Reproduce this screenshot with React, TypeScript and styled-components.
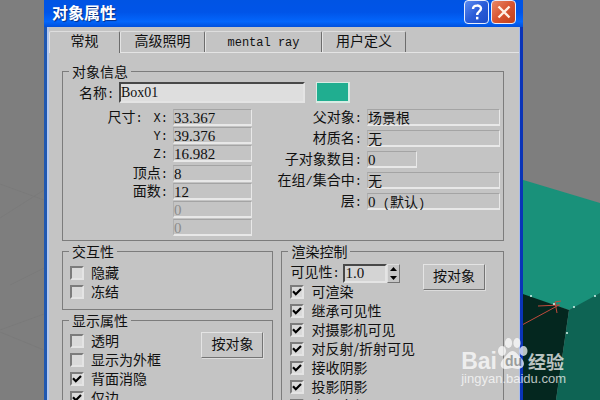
import React, { useState } from "react";
import styled, { createGlobalStyle } from "styled-components";

const GlobalStyle = createGlobalStyle`
  * { box-sizing: border-box; }
  body { margin: 0; background: #7e7e7e; }
`;

const Stage = styled.main`
  position: relative;
  height: 100vh;
  overflow: hidden;
  background: #7e7e7e;
  color: #101010;
  font: 14px/16px "Noto Sans CJK SC", sans-serif;
`;

const Viewport = styled.svg`
  position: absolute;
  top: 0;
  right: 0;
  width: 600px;
  height: 400px;
`;

const Dialog = styled.section`
  position: relative;
  margin: 0 77px 0 44px;
  min-height: 100%;
  background: #c4c4c4;
  border-left: 3px solid #1f57b0;
  border-right: 3px solid #0a34b8;
`;

const TitleBar = styled.header`
  display: flex;
  align-items: center;
  gap: 2px;
  height: 27px;
  margin: 0 -3px;
  padding: 0 7px 3px 8px;
  background: linear-gradient(#0054e4 0, #0054e8 45%, #0366fc 80%, #0050dc 100%);
`;

const Title = styled.h1`
  flex: 1;
  margin: 0;
  color: #fff;
  font-size: 16px;
  line-height: 24px;
  font-weight: 700;
  text-shadow: 1px 1px 1px #0a2f80;
`;

const CaptionButton = styled.button<{ $tone: "help" | "close" }>`
  width: 25px;
  height: 24px;
  padding: 0;
  border: 1px solid #e8eefc;
  border-radius: 4px;
  background: ${(p) =>
    p.$tone === "help"
      ? "linear-gradient(135deg, #5c8cf0, #2a5cd8 50%, #1c4cc8)"
      : "linear-gradient(135deg, #e88868, #d85430 50%, #c04018)"};
  svg { display: block; margin: auto; }
`;

const Client = styled.div`
  border-left: 2px solid #b4c8ee;
  border-right: 1px solid #a8bcec;
  padding-top: 4px;
`;

const TabBar = styled.nav`
  display: flex;
  border-bottom: 1px solid #e4e4e4;
`;

const Tab = styled.button<{ $width: number; $active?: boolean }>`
  width: ${(p) => p.$width}px;
  height: ${(p) => (p.$active ? 22 : 21)}px;
  margin-bottom: ${(p) => (p.$active ? "-1px" : "0")};
  padding: 0 0 ${(p) => (p.$active ? 5 : 4)}px;
  border: 0;
  border-top: 1px solid #dedede;
  border-left: 1px solid #e4e4e4;
  border-right: 1px solid #6c6c6c;
  border-radius: 2px 2px 0 0;
  background: #c4c4c4;
  color: inherit;
  font: inherit;
`;

const Half = styled.span`
  font: 12px/0 "Liberation Mono", monospace;
`;

const Digits = styled.span`
  font: 15px/0 "Liberation Serif", serif;
`;

const Panel = styled.div`
  display: flex;
  flex-direction: column;
  gap: 2px;
  padding: 10px 15px 0 13px;
`;

const Group = styled.fieldset<{ $grow?: boolean }>`
  min-width: 0;
  margin: 0;
  padding: 0;
  border: 1px solid #7c7c7c;
  flex: ${(p) => (p.$grow ? "1" : "none")};
`;

const Legend = styled.legend`
  margin-left: 6px;
  padding: 0 3px;
  line-height: 16px;
`;

const NameRow = styled.div`
  display: flex;
  align-items: center;
  gap: 11px;
  padding: 3px 0 0 16px;
`;

const NameLabel = styled.label`
  width: 29px;
  padding-bottom: 2px;
  white-space: nowrap;
`;

const NameInput = styled.input`
  flex: 1;
  min-width: 0;
  max-width: 186px;
  height: 21px;
  padding: 0;
  border: 2px solid;
  border-color: #484848 #e4e4e4 #e4e4e4 #484848;
  background: #dedede;
  color: #101010;
  font: 14px/16px "Liberation Serif", serif;
`;

const Swatch = styled.button`
  width: 34px;
  height: 21px;
  padding: 0;
  border: 1px solid #d8ece4;
  border-right-width: 2px;
  border-bottom-width: 2px;
  background: #20ae90;
`;

const InfoColumns = styled.div`
  display: flex;
  padding: 6px 3px 4px 0;
`;

const SizeList = styled.dl`
  display: grid;
  grid-template-columns: 105px 79px;
  column-gap: 5px;
  row-gap: 1px;
  margin: 0;
`;

const ParentList = styled.dl`
  flex: 1;
  display: grid;
  grid-template-columns: 110px 1fr;
  column-gap: 5px;
  row-gap: 4px;
  align-content: start;
  margin: 0;
`;

const Term = styled.dt<{ $gapAbove?: boolean }>`
  height: 17px;
  margin-top: ${(p) => (p.$gapAbove ? 2 : 0)}px;
  text-align: right;
  line-height: 14px;
  white-space: nowrap;
`;

const Axis = styled(Half)`
  margin-left: 11px;
`;

const Value = styled.dd<{ $gapAbove?: boolean; $dim?: boolean; $short?: boolean }>`
  height: 17px;
  margin: ${(p) => (p.$gapAbove ? 2 : 0)}px 0 0;
  width: ${(p) => (p.$short ? "50px" : "auto")};
  border: 1px solid;
  border-color: #a4a4a4 #e8e8e8 #e8e8e8 #b0b0b0;
  border-bottom-width: 2px;
  color: ${(p) => (p.$dim ? "#8c8c8c" : "inherit")};
  white-space: nowrap;
  line-height: 15px;
`;

const LowerColumns = styled.div`
  display: grid;
  grid-template-columns: 211fr 222fr;
  gap: 8px;
`;

const Stack = styled.div`
  display: flex;
  flex-direction: column;
  gap: 2px;
`;

const GroupBody = styled.div<{ $top: number; $bottom: number }>`
  display: flex;
  justify-content: space-between;
  align-items: flex-start;
  padding: ${(p) => p.$top}px 9px ${(p) => p.$bottom}px 7px;
`;

const CheckLabel = styled.label`
  display: flex;
  align-items: center;
  gap: 7px;
  height: 19px;
  white-space: nowrap;
`;

const CheckText = styled.span`
  padding-bottom: 2px;
`;

const CheckBox = styled.input`
  appearance: none;
  width: 14px;
  height: 14px;
  margin: 0;
  border: 2px solid;
  border-color: #7c7c7c #e4e4e4 #e4e4e4 #7c7c7c;
  background: #dadada;
  &:checked {
    background: #dadada
      url("data:image/svg+xml,%3Csvg xmlns='http://www.w3.org/2000/svg' viewBox='0 0 10 10'%3E%3Cpath d='M1 4.2L3.8 7.2L9 2' fill='none' stroke='%23000' stroke-width='2.2'/%3E%3C/svg%3E")
      center / 10px 10px no-repeat;
  }
`;

const PushButton = styled.button`
  width: 62px;
  height: 26px;
  margin-top: 1px;
  padding: 0 0 4px;
  border: 1px solid;
  border-color: #e4e4e4 #747474 #747474 #e4e4e4;
  box-shadow: 1px 1px 0 #dcdcdc;
  background: #c6c6c6;
  color: inherit;
  font: inherit;
`;

const RenderHead = styled.div`
  display: flex;
  align-items: flex-start;
  height: 23px;
  padding: 5px 18px 0 8px;
`;

const VisibilityLabel = styled.label`
  width: 53px;
  line-height: 14px;
  white-space: nowrap;
`;

const VisibilityInput = styled(NameInput)`
  flex: none;
  width: 44px;
  height: 19px;
  background: #d4d4d4;
  font-size: 15px;
`;

const Spinner = styled.div`
  display: grid;
  grid-template-rows: 1fr 1fr;
  width: 13px;
  height: 19px;
  margin-right: auto;
  border: 1px solid;
  border-color: #dedede #747474 #747474 #dedede;
`;

const SpinButton = styled.button`
  display: grid;
  place-items: center;
  padding: 0;
  border: 0;
  background: #c6c6c6;
`;

const RenderButton = styled(PushButton)`
  margin-top: 0;
`;

const RenderChecks = styled.div`
  padding: 0 8px 8px 8px;
`;

const Watermark = styled.aside`
  position: absolute;
  right: 34px;
  bottom: 13px;
  color: #fff;
  opacity: 0.72;
`;

const Brand = styled.div`
  display: flex;
  align-items: flex-end;
  height: 38px;
  font: 700 23px/20px "Liberation Sans", sans-serif;
`;

const BrandSuffix = styled.span`
  font: 700 18px/20px "Noto Sans CJK SC", sans-serif;
`;

const Address = styled.div`
  font: 13px/16px "Liberation Sans", sans-serif;
`;

function Checks({ items }: { items: [string, boolean][] }) {
  const [state, setState] = useState(items.map(([, on]) => on));
  return (
    <div>
      {items.map(([label], i) => (
        <CheckLabel key={label}>
          <CheckBox
            type="checkbox"
            checked={state[i]}
            onChange={() => setState(state.map((on, j) => (j === i ? !on : on)))}
          />
          <CheckText>{label}</CheckText>
        </CheckLabel>
      ))}
    </div>
  );
}

function Scene() {
  return (
    <Viewport viewBox="0 0 600 400" aria-hidden="true">
      <g stroke="#7a7a7a" fill="none">
        <path d="M0 184L44 200M0 218L44 190M10 285L44 268M0 330L44 314M0 332L44 350" />
      </g>
      <path d="M520 179L600 203V296L569 310L520 294Z" fill="#19917a" />
      <path d="M520 293L569 310L556 400H520Z" fill="#04271f" />
      <path d="M569 310L600 293V400H556Z" fill="#0e6454" />
      <path d="M522 325L559 305M538 306L560 305M557 313L555 302L561 301" stroke="#c04a3c" fill="none" />
      <g fill="#d8f4ec">
        <circle cx="531" cy="296" r="1" />
        <circle cx="554" cy="304" r="1" />
        <circle cx="574" cy="307" r="1" />
        <circle cx="595" cy="296" r="1" />
        <circle cx="567" cy="333" r="1" />
      </g>
    </Viewport>
  );
}

export default function App() {
  const [name, setName] = useState("Box01");
  const [visibility, setVisibility] = useState("1.0");
  const step = (d: number) => setVisibility((parseFloat(visibility) + d).toFixed(1));

  return (
    <Stage>
      <GlobalStyle />
      <Scene />
      <Dialog aria-label="对象属性">
        <TitleBar>
          <Title>对象属性</Title>
          <CaptionButton $tone="help" aria-label="帮助">
            <svg width="16" height="18" viewBox="0 0 16 18" fill="none" stroke="#fff" strokeWidth="2.4">
              <path d="M4 6C4 1.5 12 1.5 12 5.6C12 8.5 8.2 8.4 8.2 12" />
              <path d="M8.2 13.8V16.4" />
            </svg>
          </CaptionButton>
          <CaptionButton $tone="close" aria-label="关闭">
            <svg width="16" height="16" viewBox="0 0 16 16" stroke="#fff0e4" strokeWidth="2.4">
              <path d="M2.5 2.5L13.5 13.5M13.5 2.5L2.5 13.5" />
            </svg>
          </CaptionButton>
        </TitleBar>
        <Client>
          <TabBar>
            <Tab $width={71} $active>常规</Tab>
            <Tab $width={85}>高级照明</Tab>
            <Tab $width={117}><Half>mental ray</Half></Tab>
            <Tab $width={84}>用户定义</Tab>
          </TabBar>
          <Panel>
            <Group>
              <Legend>对象信息</Legend>
              <NameRow>
                <NameLabel htmlFor="name">名称<Half>:</Half></NameLabel>
                <NameInput id="name" value={name} onChange={(e) => setName(e.target.value)} />
                <Swatch aria-label="颜色" />
              </NameRow>
              <InfoColumns>
                <SizeList>
                  <Term>尺寸<Half>:</Half><Axis>X:</Axis></Term>
                  <Value><Digits>33.367</Digits></Value>
                  <Term><Half>Y:</Half></Term>
                  <Value><Digits>39.376</Digits></Value>
                  <Term><Half>Z:</Half></Term>
                  <Value><Digits>16.982</Digits></Value>
                  <Term $gapAbove>顶点<Half>:</Half></Term>
                  <Value $gapAbove><Digits>8</Digits></Value>
                  <Term>面数<Half>:</Half></Term>
                  <Value><Digits>12</Digits></Value>
                  <Term />
                  <Value $dim><Digits>0</Digits></Value>
                  <Term />
                  <Value $dim><Digits>0</Digits></Value>
                </SizeList>
                <ParentList>
                  <Term>父对象<Half>:</Half></Term>
                  <Value>场景根</Value>
                  <Term>材质名<Half>:</Half></Term>
                  <Value>无</Value>
                  <Term>子对象数目<Half>:</Half></Term>
                  <Value $short><Digits>0</Digits></Value>
                  <Term>在组<Half>/</Half>集合中<Half>:</Half></Term>
                  <Value>无</Value>
                  <Term>层<Half>:</Half></Term>
                  <Value><Digits>0</Digits><Half> (</Half>默认<Half>)</Half></Value>
                </ParentList>
              </InfoColumns>
            </Group>
            <LowerColumns>
              <Stack>
                <Group>
                  <Legend>交互性</Legend>
                  <GroupBody $top={4} $bottom={8}>
                    <Checks items={[["隐藏", false], ["冻结", false]]} />
                  </GroupBody>
                </Group>
                <Group $grow>
                  <Legend>显示属性</Legend>
                  <GroupBody $top={3} $bottom={8}>
                    <Checks
                      items={[["透明", false], ["显示为外框", false], ["背面消隐", true], ["仅边", true]]}
                    />
                    <PushButton>按对象</PushButton>
                  </GroupBody>
                </Group>
              </Stack>
              <Group>
                <Legend>渲染控制</Legend>
                <RenderHead>
                  <VisibilityLabel htmlFor="visibility">可见性<Half>:</Half></VisibilityLabel>
                  <VisibilityInput
                    id="visibility"
                    value={visibility}
                    onChange={(e) => setVisibility(e.target.value)}
                  />
                  <Spinner>
                    <SpinButton aria-label="增加" onClick={() => step(0.1)}>
                      <svg width="7" height="4" viewBox="0 0 7 4"><path d="M0 4L3.5 0L7 4Z" /></svg>
                    </SpinButton>
                    <SpinButton aria-label="减少" onClick={() => step(-0.1)}>
                      <svg width="7" height="4" viewBox="0 0 7 4"><path d="M0 0L3.5 4L7 0Z" /></svg>
                    </SpinButton>
                  </Spinner>
                  <RenderButton>按对象</RenderButton>
                </RenderHead>
                <RenderChecks>
                  <Checks
                    items={[
                      ["可渲染", true],
                      ["继承可见性", true],
                      ["对摄影机可见", true],
                      ["对反射/折射可见", true],
                      ["接收阴影", true],
                      ["投影阴影", true],
                      ["应用大气", true],
                    ]}
                  />
                </RenderChecks>
              </Group>
            </LowerColumns>
          </Panel>
        </Client>
      </Dialog>
      <Watermark>
        <Brand>
          Bai
          <svg width="31" height="36" viewBox="0 0 31 36" fill="#fff">
            <ellipse cx="5" cy="16" rx="4" ry="5" />
            <ellipse cx="11.5" cy="8" rx="3.6" ry="5" />
            <ellipse cx="20" cy="8" rx="3.6" ry="5" />
            <ellipse cx="26.5" cy="16" rx="4" ry="5" />
            <path d="M15.5 16C19 16 21 20 24 23C30 29 26 34 21 34C18 34 17 33 15.5 33C14 33 12 34 9 34C4 34 1 29 7 23C10 20 12 16 15.5 16Z" />
            <text x="8" y="31" fontFamily="Liberation Sans" fontSize="14" fontWeight="700" fill="#8a8f8d">du</text>
          </svg>
          <BrandSuffix>经验</BrandSuffix>
        </Brand>
        <Address>jingyan.baidu.com</Address>
      </Watermark>
    </Stage>
  );
}
